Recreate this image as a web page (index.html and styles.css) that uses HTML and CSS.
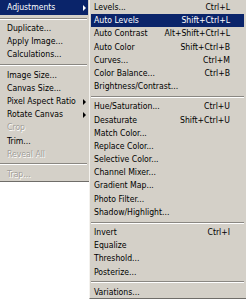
FILE: index.html
```html
<!DOCTYPE html>
<html lang="en">
<head>
  <meta charset="UTF-8" />
  <title>Image menu - Adjustments</title>
  <link rel="stylesheet" href="styles.css">
</head>
<body>
  <div class="menus">
    <ul class="menu menu-image">
      <li class="item first active sub">Adjustments</li>
      <li class="sep"></li>
      <li class="item">Duplicate...</li>
      <li class="item">Apply Image...</li>
      <li class="item">Calculations...</li>
      <li class="sep"></li>
      <li class="item">Image Size...</li>
      <li class="item">Canvas Size...</li>
      <li class="item sub">Pixel Aspect Ratio</li>
      <li class="item sub">Rotate Canvas</li>
      <li class="item disabled">Crop</li>
      <li class="item">Trim...</li>
      <li class="item disabled">Reveal All</li>
      <li class="sep"></li>
      <li class="item disabled">Trap...</li>
    </ul>

    <ul class="menu menu-adjust">
      <li class="item"><span>Levels...</span><span class="key">Ctrl+L</span></li>
      <li class="item active"><span>Auto Levels</span><span class="key">Shift+Ctrl+L</span></li>
      <li class="item"><span>Auto Contrast</span><span class="key">Alt+Shift+Ctrl+L</span></li>
      <li class="item"><span>Auto Color</span><span class="key">Shift+Ctrl+B</span></li>
      <li class="item"><span>Curves...</span><span class="key">Ctrl+M</span></li>
      <li class="item"><span>Color Balance...</span><span class="key">Ctrl+B</span></li>
      <li class="item"><span>Brightness/Contrast...</span></li>
      <li class="sep"></li>
      <li class="item"><span>Hue/Saturation...</span><span class="key">Ctrl+U</span></li>
      <li class="item"><span>Desaturate</span><span class="key">Shift+Ctrl+U</span></li>
      <li class="item"><span>Match Color...</span></li>
      <li class="item"><span>Replace Color...</span></li>
      <li class="item"><span>Selective Color...</span></li>
      <li class="item"><span>Channel Mixer...</span></li>
      <li class="item"><span>Gradient Map...</span></li>
      <li class="item"><span>Photo Filter...</span></li>
      <li class="item"><span>Shadow/Highlight...</span></li>
      <li class="sep"></li>
      <li class="item"><span>Invert</span><span class="key">Ctrl+I</span></li>
      <li class="item"><span>Equalize</span></li>
      <li class="item"><span>Threshold...</span></li>
      <li class="item"><span>Posterize...</span></li>
      <li class="sep"></li>
      <li class="item"><span>Variations...</span></li>
    </ul>
  </div>
</body>
</html>
```

FILE: styles.css
```css
body {
  margin: 0;
  background-color: #ffffff;
  font-family: "DejaVu Sans Condensed", "DejaVu Sans", sans-serif;
  font-size: 8.6px;
  color: #000000;
}

.menus {
  display: flex;
  align-items: flex-start;
  width: 246px;
}

.menu {
  list-style: none;
  margin: 0;
  padding: 0;
  background-color: #d4d0c8;
}

.menu-image {
  flex: none;
  width: 88px;
  padding-right: 1px;
  border-bottom: 1px solid #6f6d69;
}

.menu-adjust {
  flex: none;
  width: 153px;
  padding: 1px 2px 0 1px;
  border-left: 1px solid #f4f2ee;
  border-bottom: 1px solid #6f6d69;
  height: 297px;
}

.item {
  display: flex;
  justify-content: space-between;
  align-items: center;
  height: 13.2px;
  line-height: 13.2px;
  white-space: nowrap;
}

.menu-image .item {
  padding-left: 7px;
  padding-right: 2px;
}

.menu-image .item.first {
  height: 15px;
}

.menu-adjust .item {
  padding-left: 3px;
  padding-right: 14px;
}

.item.active {
  background-color: #0a246a;
  color: #ffffff;
}

.item.disabled {
  color: #a19e98;
  text-shadow: 0.7px 0.7px 0 #ffffff;
}

/* submenu arrow */
.item.sub::after {
  content: "";
  border-top: 3px solid transparent;
  border-bottom: 3px solid transparent;
  border-left: 3px solid #000000;
}

.item.sub.active::after {
  border-left-color: #ffffff;
}

.sep {
  height: 7px;
  display: flex;
  align-items: center;
}

.sep::before {
  content: "";
  flex: 1;
  border-top: 1px solid #8a8782;
  border-bottom: 1px solid #ffffff;
}

.menu-image .sep::before {
  margin: 0 1px 0 0;
}
```
